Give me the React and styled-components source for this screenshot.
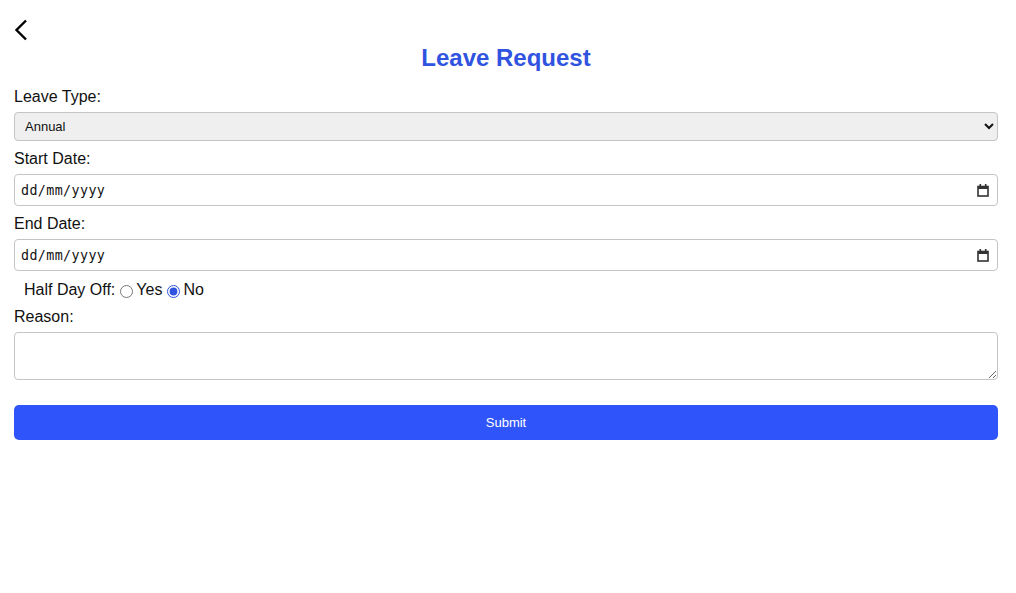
import React, { useState } from 'react';
import styled, { createGlobalStyle } from 'styled-components';

const GlobalStyle = createGlobalStyle`
  body {
    margin: 0;
    background: #fff;
    font-family: "Liberation Sans", Arial, sans-serif;
    color: #111;
  }
`;

const Page = styled.div`
  width: 984px;
  margin-left: 14px;
  padding-top: 19px;
`;

const BackButton = styled.button`
  display: block;
  width: 14px;
  height: 22px;
  padding: 0;
  border: none;
  background: none;
  cursor: pointer;
`;

const Title = styled.h1`
  margin: 2px 0 0;
  text-align: center;
  font-size: 24px;
  line-height: 30px;
  font-weight: bold;
  color: #3053e0;
`;

const Form = styled.form`
  display: flex;
  flex-direction: column;
  margin-top: 15px;
`;

const Label = styled.label`
  display: block;
  font-size: 16px;
  line-height: 18px;
  margin-bottom: 6px;
`;

const Select = styled.select`
  box-sizing: border-box;
  width: 100%;
  height: 29px;
  padding: 0 6px;
  margin-bottom: 9px;
  font-family: "Liberation Sans", Arial, sans-serif;
  font-size: 13px;
  color: #111;
  background: #efefef;
  border: 1px solid #c4c4c4;
  border-radius: 4px;
`;

const DateBox = styled.div`
  box-sizing: border-box;
  display: flex;
  align-items: center;
  width: 100%;
  height: 32px;
  padding: 0 8px 0 6px;
  margin-bottom: 9px;
  background: #fff;
  border: 1px solid #c4c4c4;
  border-radius: 4px;
`;

const DateText = styled.input`
  flex: 1;
  min-width: 0;
  padding: 0;
  border: none;
  outline: none;
  background: transparent;
  font-family: "DejaVu Sans Mono", monospace;
  font-size: 13.33px;
  letter-spacing: 0.4px;
  color: #111;

  &::placeholder {
    color: #111;
    opacity: 1;
  }
`;

const CalendarIcon = styled.svg`
  flex: none;
  display: block;
`;

const RadioRow = styled.div`
  display: flex;
  align-items: center;
  height: 18px;
  padding-left: 10px;
  margin: 1px 0 9px;
  font-size: 16px;
`;

const Radio = styled.input`
  margin: 3px 3px 0 5px;
  accent-color: #3053e0;
`;

const TextArea = styled.textarea`
  box-sizing: border-box;
  width: 100%;
  height: 48px;
  padding: 6px;
  margin-bottom: 25px;
  font-family: "Liberation Sans", Arial, sans-serif;
  font-size: 13px;
  border: 1px solid #c4c4c4;
  border-radius: 4px;
  resize: vertical;
`;

const SubmitButton = styled.button`
  width: 100%;
  height: 35px;
  border: none;
  border-radius: 5px;
  background: #2f54fa;
  color: #fff;
  font-family: "Liberation Sans", Arial, sans-serif;
  font-size: 13px;
  cursor: pointer;
`;

const DateField = ({ id }) => (
  <DateBox>
    <DateText id={id} type="text" placeholder="dd/mm/yyyy" />
    <CalendarIcon width="12" height="13" viewBox="0 0 12 13" fill="none">
      <rect x="1" y="2.5" width="10" height="9.5" stroke="#333" strokeWidth="1.6" />
      <rect x="1" y="2.5" width="10" height="2.5" fill="#333" />
      <rect x="2.5" y="0" width="1.6" height="3" fill="#333" />
      <rect x="7.9" y="0" width="1.6" height="3" fill="#333" />
    </CalendarIcon>
  </DateBox>
);

const App = () => {
  const [halfDay, setHalfDay] = useState('no');

  return (
    <>
      <GlobalStyle />
      <Page>
        <BackButton type="button" aria-label="Back">
          <svg width="14" height="22" viewBox="0 0 14 22" fill="none">
            <polyline points="12,1.5 2.5,11 12,20.5" stroke="#000" strokeWidth="2.4" />
          </svg>
        </BackButton>
        <Title>Leave Request</Title>
        <Form onSubmit={e => e.preventDefault()}>
          <Label htmlFor="type">Leave Type:</Label>
          <Select id="type" defaultValue="annual">
            <option value="annual">Annual</option>
            <option value="sick">Sick</option>
            <option value="unpaid">Unpaid</option>
          </Select>

          <Label htmlFor="start">Start Date:</Label>
          <DateField id="start" />

          <Label htmlFor="end">End Date:</Label>
          <DateField id="end" />

          <RadioRow>
            Half Day Off:
            <Radio
              type="radio"
              name="half"
              checked={halfDay === 'yes'}
              onChange={() => setHalfDay('yes')}
            />
            Yes
            <Radio
              type="radio"
              name="half"
              checked={halfDay === 'no'}
              onChange={() => setHalfDay('no')}
            />
            No
          </RadioRow>

          <Label htmlFor="reason">Reason:</Label>
          <TextArea id="reason" />

          <SubmitButton type="submit">Submit</SubmitButton>
        </Form>
      </Page>
    </>
  );
};

export default App;
